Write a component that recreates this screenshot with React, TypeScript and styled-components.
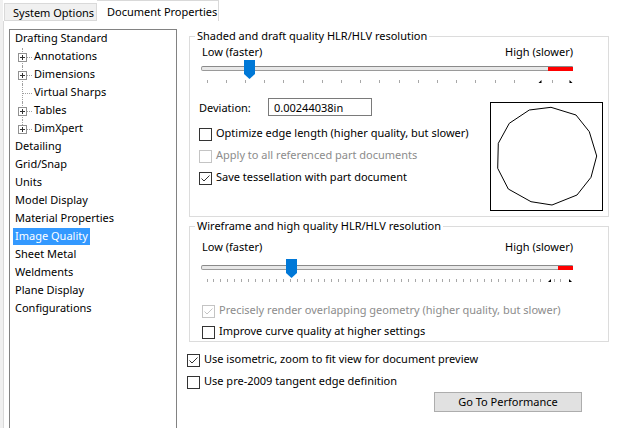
import React from "react";
import styled, { createGlobalStyle } from "styled-components";

const GlobalStyle = createGlobalStyle`
  html, body { margin: 0; padding: 0; width: 625px; height: 428px; overflow: hidden; background: #fff; }
  body { font-family: "Noto Sans", "Segoe UI", sans-serif; font-size: 11px; color: #000; }
  * { box-sizing: border-box; }
`;

const Window = styled.div`
  width: 625px;
  height: 428px;
  display: flex;
  flex-direction: column;
  overflow: hidden;
  background: #fff;
  border-left: 3px solid #f0f0f0;
`;

const TabBar = styled.div`
  height: 21px;
  display: flex;
  align-items: flex-end;
  padding-left: 1px;
  flex-shrink: 0;
`;

const Tab = styled.div<{ $active?: boolean; $w: number; $pl: number }>`
  width: ${(p) => p.$w}px;
  height: ${(p) => (p.$active ? 21 : 18)}px;
  padding-left: ${(p) => p.$pl}px;
  display: flex;
  align-items: center;
  white-space: nowrap;
  border: 1px solid #d9d9d9;
  border-bottom: ${(p) => (p.$active ? "none" : "1px solid #d9d9d9")};
  border-left: ${(p) => (p.$active ? "none" : "1px solid #d9d9d9")};
  background: ${(p) => (p.$active ? "#fff" : "#f0f0f0")};
`;

const Panel = styled.div`
  flex: 1;
  min-height: 0;
  display: flex;
  border-left: 1px solid #d9d9d9;
  background: #fff;
`;

const Tree = styled.div`
  margin: 8px 0 0 5px;
  width: 168px;
  height: 420px;
  flex-shrink: 0;
  border: 1px solid #828282;
  background: #fff;
  padding-left: 3px;
`;

const TreeRow = styled.div`
  height: 18px;
  display: flex;
  align-items: flex-start;
`;

const TreeLabel = styled.span<{ $selected?: boolean }>`
  padding: 0 2px 2px;
  height: 17px;
  line-height: 15px;
  white-space: nowrap;
  background: ${(p) => (p.$selected ? "#3399ff" : "transparent")};
  color: ${(p) => (p.$selected ? "#fff" : "#000")};
`;

const Connector = styled.span`
  position: relative;
  width: 19px;
  height: 18px;
  flex-shrink: 0;
`;

const VLine = styled.span<{ $last?: boolean }>`
  position: absolute;
  left: 9px;
  top: 0;
  height: ${(p) => (p.$last ? 9 : 18)}px;
  border-left: 1px dotted #a0a0a0;
`;

const HLine = styled.span`
  position: absolute;
  left: 10px;
  top: 9px;
  width: 9px;
  border-top: 1px dotted #a0a0a0;
`;

const Expander = styled.svg`
  position: absolute;
  left: 5px;
  top: 5px;
`;

const RightColumn = styled.div`
  margin-left: 10px;
  padding-top: 7px;
  display: flex;
  flex-direction: column;
  width: 430px;
`;

const Group = styled.fieldset<{ $mt?: number; $pb: number }>`
  margin: ${(p) => p.$mt ?? 0}px 0 0 2px;
  padding: 0 5px ${(p) => p.$pb}px 9px;
  border: 1px solid #dcdcdc;
  width: 420px;
  min-width: 0;
  display: flex;
  flex-direction: column;
`;

const Legend = styled.legend`
  padding: 0 2px;
  margin-left: -4px;
  line-height: 16px;
  font-size: 11px;
`;

const LabelRow = styled.div<{ $mt: number }>`
  display: flex;
  justify-content: space-between;
  height: 16px;
  line-height: 16px;
  margin: ${(p) => p.$mt}px 30px 0 3px;
`;

const SliderBox = styled.div<{ $mt: number }>`
  position: relative;
  width: 372px;
  height: 24px;
  margin: ${(p) => p.$mt}px 0 0 2px;
  padding-top: 6px;
  display: flex;
  flex-direction: column;
`;

const Track = styled.div`
  position: relative;
  height: 5px;
  border: 1px solid #9a9a9a;
  border-top-color: #8a8a8a;
  border-radius: 2px 0 0 2px;
  background: #e8e8e8;
`;

const Selection = styled.div`
  position: absolute;
  top: 0;
  right: -1px;
  height: 4px;
  background: #ff0000;
`;

const Ticks = styled.svg`
  display: block;
  margin-top: 9px;
`;

const Thumb = styled.svg`
  position: absolute;
  top: 0;
`;

const DetailRow = styled.div`
  display: flex;
  margin-top: 14px;
`;

const LeftCol = styled.div`
  flex: 1;
  display: flex;
  flex-direction: column;
`;

const FieldRow = styled.div`
  display: flex;
  align-items: center;
  height: 18px;
`;

const FieldLabel = styled.span`
  width: 69px;
`;

const TextInput = styled.input`
  width: 104px;
  height: 18px;
  border: 1px solid #7a7a7a;
  padding: 0 0 0 5px;
  margin: 0;
  font: inherit;
  color: #000;
  background: #fff;
  outline: none;
`;

const CheckRow = styled.div<{ $mt: number; $ml?: number; $disabled?: boolean }>`
  display: flex;
  align-items: center;
  gap: 4px;
  height: 16px;
  margin: ${(p) => p.$mt}px 0 0 ${(p) => p.$ml ?? 0}px;
  white-space: nowrap;
  color: ${(p) => (p.$disabled ? "#8c8c8c" : "#000")};
`;

const CheckText = styled.span`
  align-self: flex-start;
  line-height: 14px;
`;

const Box = styled.span<{ $disabled?: boolean }>`
  width: 13px;
  height: 13px;
  flex-shrink: 0;
  border: 1px solid ${(p) => (p.$disabled ? "#c4c4c4" : "#333")};
  background: #fff;
  display: flex;
`;

const PreviewBox = styled.div`
  width: 113px;
  height: 109px;
  margin-top: 4px;
  border: 1px solid #000;
  background: #fff;
  flex-shrink: 0;
`;

const Button = styled.button`
  width: 148px;
  height: 20px;
  margin: 2px 0 0 247px;
  padding: 0 0 1px;
  border: 1px solid #adadad;
  background: #e1e1e1;
  font: inherit;
  color: #000;
`;

function Check({ checked, disabled }: { checked?: boolean; disabled?: boolean }) {
  return (
    <Box $disabled={disabled}>
      {checked && (
        <svg width="11" height="11" viewBox="0 0 11 11">
          <polyline
            points="1.5,5.5 4,8 9.5,2.5"
            fill="none"
            stroke={disabled ? "#c4c4c4" : "#333"}
            strokeWidth="1"
          />
        </svg>
      )}
    </Box>
  );
}

function CheckItem(props: {
  label: string;
  checked?: boolean;
  disabled?: boolean;
  mt: number;
  ml?: number;
}) {
  return (
    <CheckRow $mt={props.mt} $ml={props.ml} $disabled={props.disabled}>
      <Check checked={props.checked} disabled={props.disabled} />
      <CheckText>{props.label}</CheckText>
    </CheckRow>
  );
}

function Slider(props: {
  mt: number;
  thumb: number;
  tickStart: number;
  tickStep: number;
  tickCount: number;
  marks: [number, number];
  selStart: number;
}) {
  const ticks: number[] = [];
  for (let i = 0; i < props.tickCount; i++) {
    const x = props.tickStart + i * props.tickStep;
    if (props.marks.some((m) => Math.abs(m - x) < (props.tickStep > 10 ? 8 : 4))) continue;
    ticks.push(Math.round(x));
  }
  const [m1, m2] = props.marks;
  return (
    <SliderBox $mt={props.mt}>
      <Track>
        <Selection style={{ left: props.selStart - 1 }} />
      </Track>
      <Ticks width="372" height="4" viewBox="0 0 372 4">
        {ticks.map((x) => (
          <rect key={x} x={x} y="0" width="1" height="3" fill="#a8a8a8" />
        ))}
        <polygon points={`${m1 - 1},3 ${m1 + 2},0 ${m1 + 2},3`} fill="#000" />
        <polygon points={`${m2 - 1},0 ${m2 - 1},3 ${m2 + 2},3`} fill="#000" />
      </Ticks>
      <Thumb width="11" height="19" viewBox="0 0 11 19" style={{ left: props.thumb }}>
        <path d="M0 0 H11 V14 L5.5 19 L0 14 Z" fill="#0078d7" />
      </Thumb>
    </SliderBox>
  );
}

function PlusIcon() {
  return (
    <Expander width="9" height="9" viewBox="0 0 9 9">
      <rect x="0.5" y="0.5" width="8" height="8" fill="#fff" stroke="#919191" />
      <line x1="2" y1="4.5" x2="7" y2="4.5" stroke="#333" />
      <line x1="4.5" y1="2" x2="4.5" y2="7" stroke="#333" />
    </Expander>
  );
}

type Node = { label: string; child?: boolean; expandable?: boolean; last?: boolean; selected?: boolean };

const nodes: Node[] = [
  { label: "Drafting Standard" },
  { label: "Annotations", child: true, expandable: true },
  { label: "Dimensions", child: true, expandable: true },
  { label: "Virtual Sharps", child: true },
  { label: "Tables", child: true, expandable: true },
  { label: "DimXpert", child: true, expandable: true, last: true },
  { label: "Detailing" },
  { label: "Grid/Snap" },
  { label: "Units" },
  { label: "Model Display" },
  { label: "Material Properties" },
  { label: "Image Quality", selected: true },
  { label: "Sheet Metal" },
  { label: "Weldments" },
  { label: "Plane Display" },
  { label: "Configurations" },
];

const polygon = [
  [61, 5.3], [86, 13], [99.3, 29.7], [106.7, 54], [101, 75.3], [87, 93], [62, 103],
  [41, 99.7], [18.3, 87], [7.7, 66.3], [8.3, 41.3], [19.3, 21.3], [39.3, 8],
]
  .map(([x, y]) => `${(x - 1).toFixed(1)},${(y - 1).toFixed(1)}`)
  .join(" ");

export default function App() {
  return (
    <>
      <GlobalStyle />
      <Window>
        <TabBar>
          <Tab $w={93} $pl={8}>System Options</Tab>
          <Tab $active $w={122} $pl={10}>Document Properties</Tab>
        </TabBar>
        <Panel>
          <Tree>
            {nodes.map((n) => (
              <TreeRow key={n.label}>
                {n.child && (
                  <Connector>
                    <VLine $last={n.last} />
                    <HLine />
                    {n.expandable && <PlusIcon />}
                  </Connector>
                )}
                <TreeLabel $selected={n.selected}>{n.label}</TreeLabel>
              </TreeRow>
            ))}
          </Tree>
          <RightColumn>
            <Group $pb={5}>
              <Legend>Shaded and draft quality HLR/HLV resolution</Legend>
              <LabelRow $mt={0}>
                <span>Low (faster)</span>
                <span>High (slower)</span>
              </LabelRow>
              <Slider
                mt={0}
                thumb={43}
                tickStart={5.5}
                tickStep={19.2}
                tickCount={19}
                marks={[338.5, 369.5]}
                selStart={347}
              />
              <DetailRow>
                <LeftCol>
                  <FieldRow>
                    <FieldLabel>Deviation:</FieldLabel>
                    <TextInput readOnly value="0.00244038in" />
                  </FieldRow>
                  <CheckItem mt={10} label="Optimize edge length (higher quality, but slower)" />
                  <CheckItem mt={6} disabled label="Apply to all referenced part documents" />
                  <CheckItem mt={6} checked label="Save tessellation with part document" />
                </LeftCol>
                <PreviewBox>
                  <svg width="111" height="107" viewBox="0 0 111 107">
                    <polygon points={polygon} fill="none" stroke="#000" strokeWidth="1" />
                  </svg>
                </PreviewBox>
              </DetailRow>
            </Group>
            <Group $mt={1} $pb={1}>
              <Legend>Wireframe and high quality HLR/HLV resolution</Legend>
              <LabelRow $mt={5}>
                <span>Low (faster)</span>
                <span>High (slower)</span>
              </LabelRow>
              <Slider
                mt={4}
                thumb={85}
                tickStart={5.5}
                tickStep={6.94}
                tickCount={52}
                marks={[348, 369]}
                selStart={357}
              />
              <CheckItem
                mt={20}
                ml={3}
                checked
                disabled
                label="Precisely render overlapping geometry (higher quality, but slower)"
              />
              <CheckItem mt={5} ml={3} label="Improve curve quality at higher settings" />
            </Group>
            <CheckItem mt={10} checked label="Use isometric, zoom to fit view for document preview" />
            <CheckItem mt={6} label="Use pre-2009 tangent edge definition" />
            <Button>Go To Performance</Button>
          </RightColumn>
        </Panel>
      </Window>
    </>
  );
}
